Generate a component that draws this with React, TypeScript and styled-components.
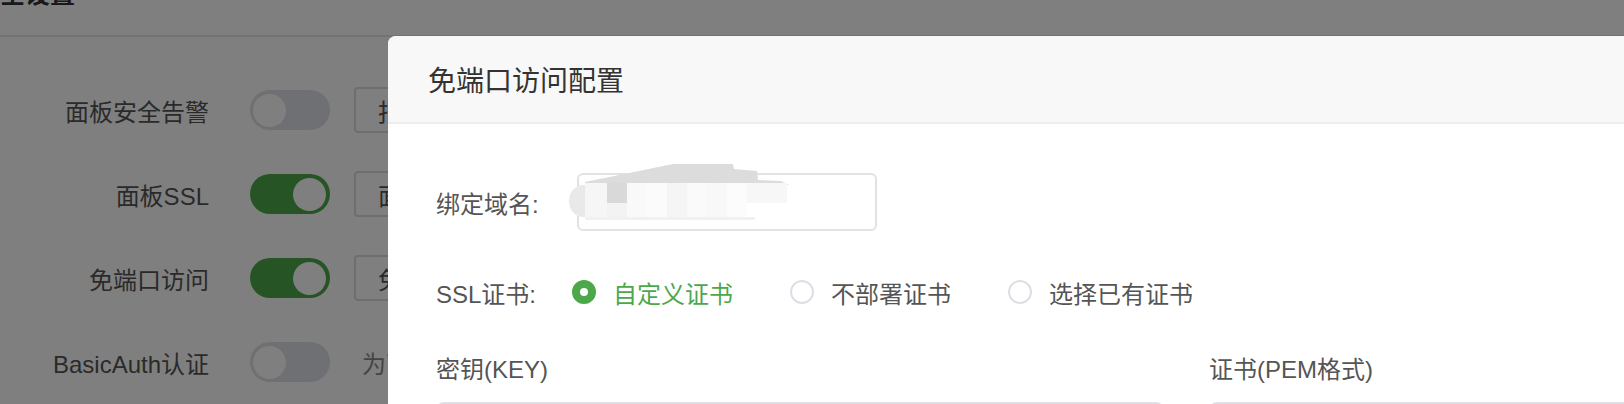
import React from 'react';
import styled, { createGlobalStyle } from 'styled-components';

const GREEN = '#4ca84b';

const GlobalStyle = createGlobalStyle`
    html, body {
        background: #fff;
        margin: 0;
        overflow: hidden;
        padding: 0;
    }

    body {
        font-family: "Liberation Sans", "Noto Sans CJK SC", sans-serif;
    }
`;

type Setting = {
    label: string;
    on: boolean;
    button?: string;
    hint?: string;
};

const settings: Setting[] = [
    { label: '面板安全告警', on: false, button: '报警设置' },
    { label: '面板SSL', on: true, button: '面板SSL配置' },
    { label: '免端口访问', on: true, button: '免端口配置' },
    { label: 'BasicAuth认证', on: false, hint: '为面板增加一道基于BasicAuth的认证服务' },
];

const certOptions = [
    { label: '自定义证书', checked: true },
    { label: '不部署证书', checked: false },
    { label: '选择已有证书', checked: false },
];

// Blurred-out domain in the input
const Redaction: React.FC = () => (
    <StyledRedaction width="230" height="60" viewBox="0 0 230 60">
        <ellipse cx="16" cy="38" rx="14" ry="16" fill="#e9e9e9" />
        <polygon
            points="18,19 106,1 166,1 167,6 190,8 191,17 214,18 222,22 18,22"
            fill="#dcdcdc"
        />
        <rect x="18" y="20" width="22" height="34" fill="#f6f6f6" />
        <rect x="40" y="20" width="20" height="20" fill="#d9d9da" />
        <rect x="40" y="40" width="20" height="14" fill="#f3f3f3" />
        <rect x="60" y="20" width="20" height="34" fill="#f9f9f9" />
        <rect x="80" y="20" width="20" height="34" fill="#fbfbfb" />
        <rect x="100" y="20" width="20" height="34" fill="#f5f5f5" />
        <rect x="120" y="20" width="20" height="34" fill="#fafafa" />
        <rect x="140" y="20" width="20" height="34" fill="#f8f8f8" />
        <rect x="160" y="20" width="20" height="34" fill="#fcfcfc" />
        <rect x="180" y="20" width="40" height="20" fill="#f7f7f7" />
        <rect x="18" y="54" width="170" height="3" fill="#f1f1f1" />
    </StyledRedaction>
);

export default function App() {
    return (
        <>
            <GlobalStyle />
            <StyledPage>
                <StyledPageHeader>
                    <StyledPageTitle>安全设置</StyledPageTitle>
                </StyledPageHeader>
                <StyledSettingList>
                    {settings.map((s) => (
                        <StyledSettingRow key={s.label}>
                            <StyledSettingLabel>{s.label}</StyledSettingLabel>
                            <StyledSwitch $on={s.on}>
                                <StyledKnob />
                            </StyledSwitch>
                            {s.button && <StyledSettingButton>{s.button}</StyledSettingButton>}
                            {s.hint && <StyledSettingHint>{s.hint}</StyledSettingHint>}
                        </StyledSettingRow>
                    ))}
                </StyledSettingList>
            </StyledPage>

            <StyledMask />

            <StyledDialog>
                <StyledDialogHeader>
                    <StyledDialogTitle>免端口访问配置</StyledDialogTitle>
                </StyledDialogHeader>
                <StyledDialogBody>
                    <StyledFormRow>
                        <StyledFormLabel>绑定域名:</StyledFormLabel>
                        <StyledInputWrap>
                            <StyledTextInput />
                            <Redaction />
                        </StyledInputWrap>
                    </StyledFormRow>
                    <StyledFormRow>
                        <StyledFormLabel>SSL证书:</StyledFormLabel>
                        <StyledRadioGroup>
                            {certOptions.map((o) => (
                                <StyledRadioItem key={o.label}>
                                    <StyledRadioCircle $checked={o.checked} />
                                    <StyledRadioText $checked={o.checked}>{o.label}</StyledRadioText>
                                </StyledRadioItem>
                            ))}
                        </StyledRadioGroup>
                    </StyledFormRow>
                    <StyledCertGrid>
                        <div>
                            <StyledCertLabel>密钥(KEY)</StyledCertLabel>
                            <StyledCertArea />
                        </div>
                        <div>
                            <StyledCertLabel>证书(PEM格式)</StyledCertLabel>
                            <StyledCertArea />
                        </div>
                    </StyledCertGrid>
                </StyledDialogBody>
            </StyledDialog>
        </>
    );
}

const StyledPage = styled.div`
    height: 404px;
    width: 100%;
`;

const StyledPageHeader = styled.div`
    border-bottom: 2px solid #e6e6e6;
    height: 35px;
    overflow: hidden;
`;

const StyledPageTitle = styled.div`
    color: #333;
    font-size: 25px;
    font-weight: 700;
    line-height: 25px;
    margin: -18px 0 0 -25px;
`;

const StyledSettingList = styled.div`
    padding-top: 31px;
`;

const StyledSettingRow = styled.div`
    align-items: center;
    display: flex;
    height: 84px;
`;

const StyledSettingLabel = styled.div`
    color: #555;
    font-size: 24px;
    text-align: right;
    width: 209px;
`;

const StyledSwitch = styled.div<{ $on: boolean }>`
    background: ${(p) => (p.$on ? GREEN : '#dfe0e6')};
    border-radius: 20px;
    box-sizing: border-box;
    display: flex;
    height: 40px;
    justify-content: ${(p) => (p.$on ? 'flex-end' : 'flex-start')};
    margin-left: 41px;
    padding: 3.5px 4px 3.5px 3px;
    width: 80px;
`;

const StyledKnob = styled.div`
    background: #fff;
    border-radius: 50%;
    height: 33px;
    width: 33px;
`;

const StyledSettingButton = styled.div`
    align-items: center;
    background: #fff;
    border: 2px solid #dddddd;
    border-radius: 4px;
    box-sizing: border-box;
    color: #555;
    display: flex;
    font-size: 24px;
    height: 46px;
    margin-left: 24px;
    padding: 0 22px;
    white-space: nowrap;
`;

const StyledSettingHint = styled.div`
    color: #888;
    font-size: 24px;
    margin-left: 32px;
    white-space: nowrap;
`;

const StyledMask = styled.div`
    background: rgba(0, 0, 0, 0.5);
    inset: 0;
    position: fixed;
`;

const StyledDialog = styled.div`
    background: #fff;
    border-radius: 8px 8px 0 0;
    height: 640px;
    left: 388px;
    position: fixed;
    top: 36px;
    width: 1500px;
`;

const StyledDialogHeader = styled.div`
    align-items: center;
    background: #f8f8f8;
    border-bottom: 2px solid #eeeeee;
    border-radius: 8px 8px 0 0;
    display: flex;
    height: 86px;
    padding-left: 40px;
`;

const StyledDialogTitle = styled.div`
    color: #333;
    font-size: 28px;
`;

const StyledDialogBody = styled.div`
    padding: 49px 0 0 48px;
`;

const StyledFormRow = styled.div`
    align-items: center;
    display: flex;
    height: 58px;

    & + & {
        margin-top: 32px;
    }
`;

const StyledFormLabel = styled.div`
    color: #555;
    flex-shrink: 0;
    font-size: 24px;
    width: 136px;
`;

const StyledInputWrap = styled.div`
    margin-left: 5px;
    position: relative;
`;

const StyledTextInput = styled.div`
    background: #fff;
    border: 2px solid #e2e2e6;
    border-radius: 6px;
    box-sizing: border-box;
    height: 58px;
    width: 300px;
`;

const StyledRedaction = styled.svg`
    left: -10px;
    pointer-events: none;
    position: absolute;
    top: -10px;
`;

const StyledRadioGroup = styled.div`
    align-items: center;
    display: flex;
`;

const StyledRadioItem = styled.div`
    align-items: center;
    display: flex;

    & + & {
        margin-left: 57px;
    }
`;

const StyledRadioCircle = styled.span<{ $checked: boolean }>`
    align-items: center;
    background: ${(p) => (p.$checked ? GREEN : '#fff')};
    border: 2px solid ${(p) => (p.$checked ? GREEN : '#dcdfe6')};
    border-radius: 50%;
    box-sizing: border-box;
    display: flex;
    height: 24px;
    justify-content: center;
    width: 24px;

    &::after {
        background: #fff;
        border-radius: 50%;
        content: '';
        display: ${(p) => (p.$checked ? 'block' : 'none')};
        height: 8px;
        width: 8px;
    }
`;

const StyledRadioText = styled.span<{ $checked: boolean }>`
    color: ${(p) => (p.$checked ? GREEN : '#555')};
    font-size: 24px;
    margin-left: 17px;
`;

const StyledCertGrid = styled.div`
    column-gap: 45px;
    display: grid;
    grid-template-columns: 728px 728px;
    margin-top: 32px;
`;

const StyledCertLabel = styled.div`
    color: #555;
    font-size: 24px;
    line-height: 34px;
`;

const StyledCertArea = styled.div`
    border: 2px solid #e0e0e6;
    border-radius: 8px;
    height: 200px;
    margin-top: 15px;
`;
